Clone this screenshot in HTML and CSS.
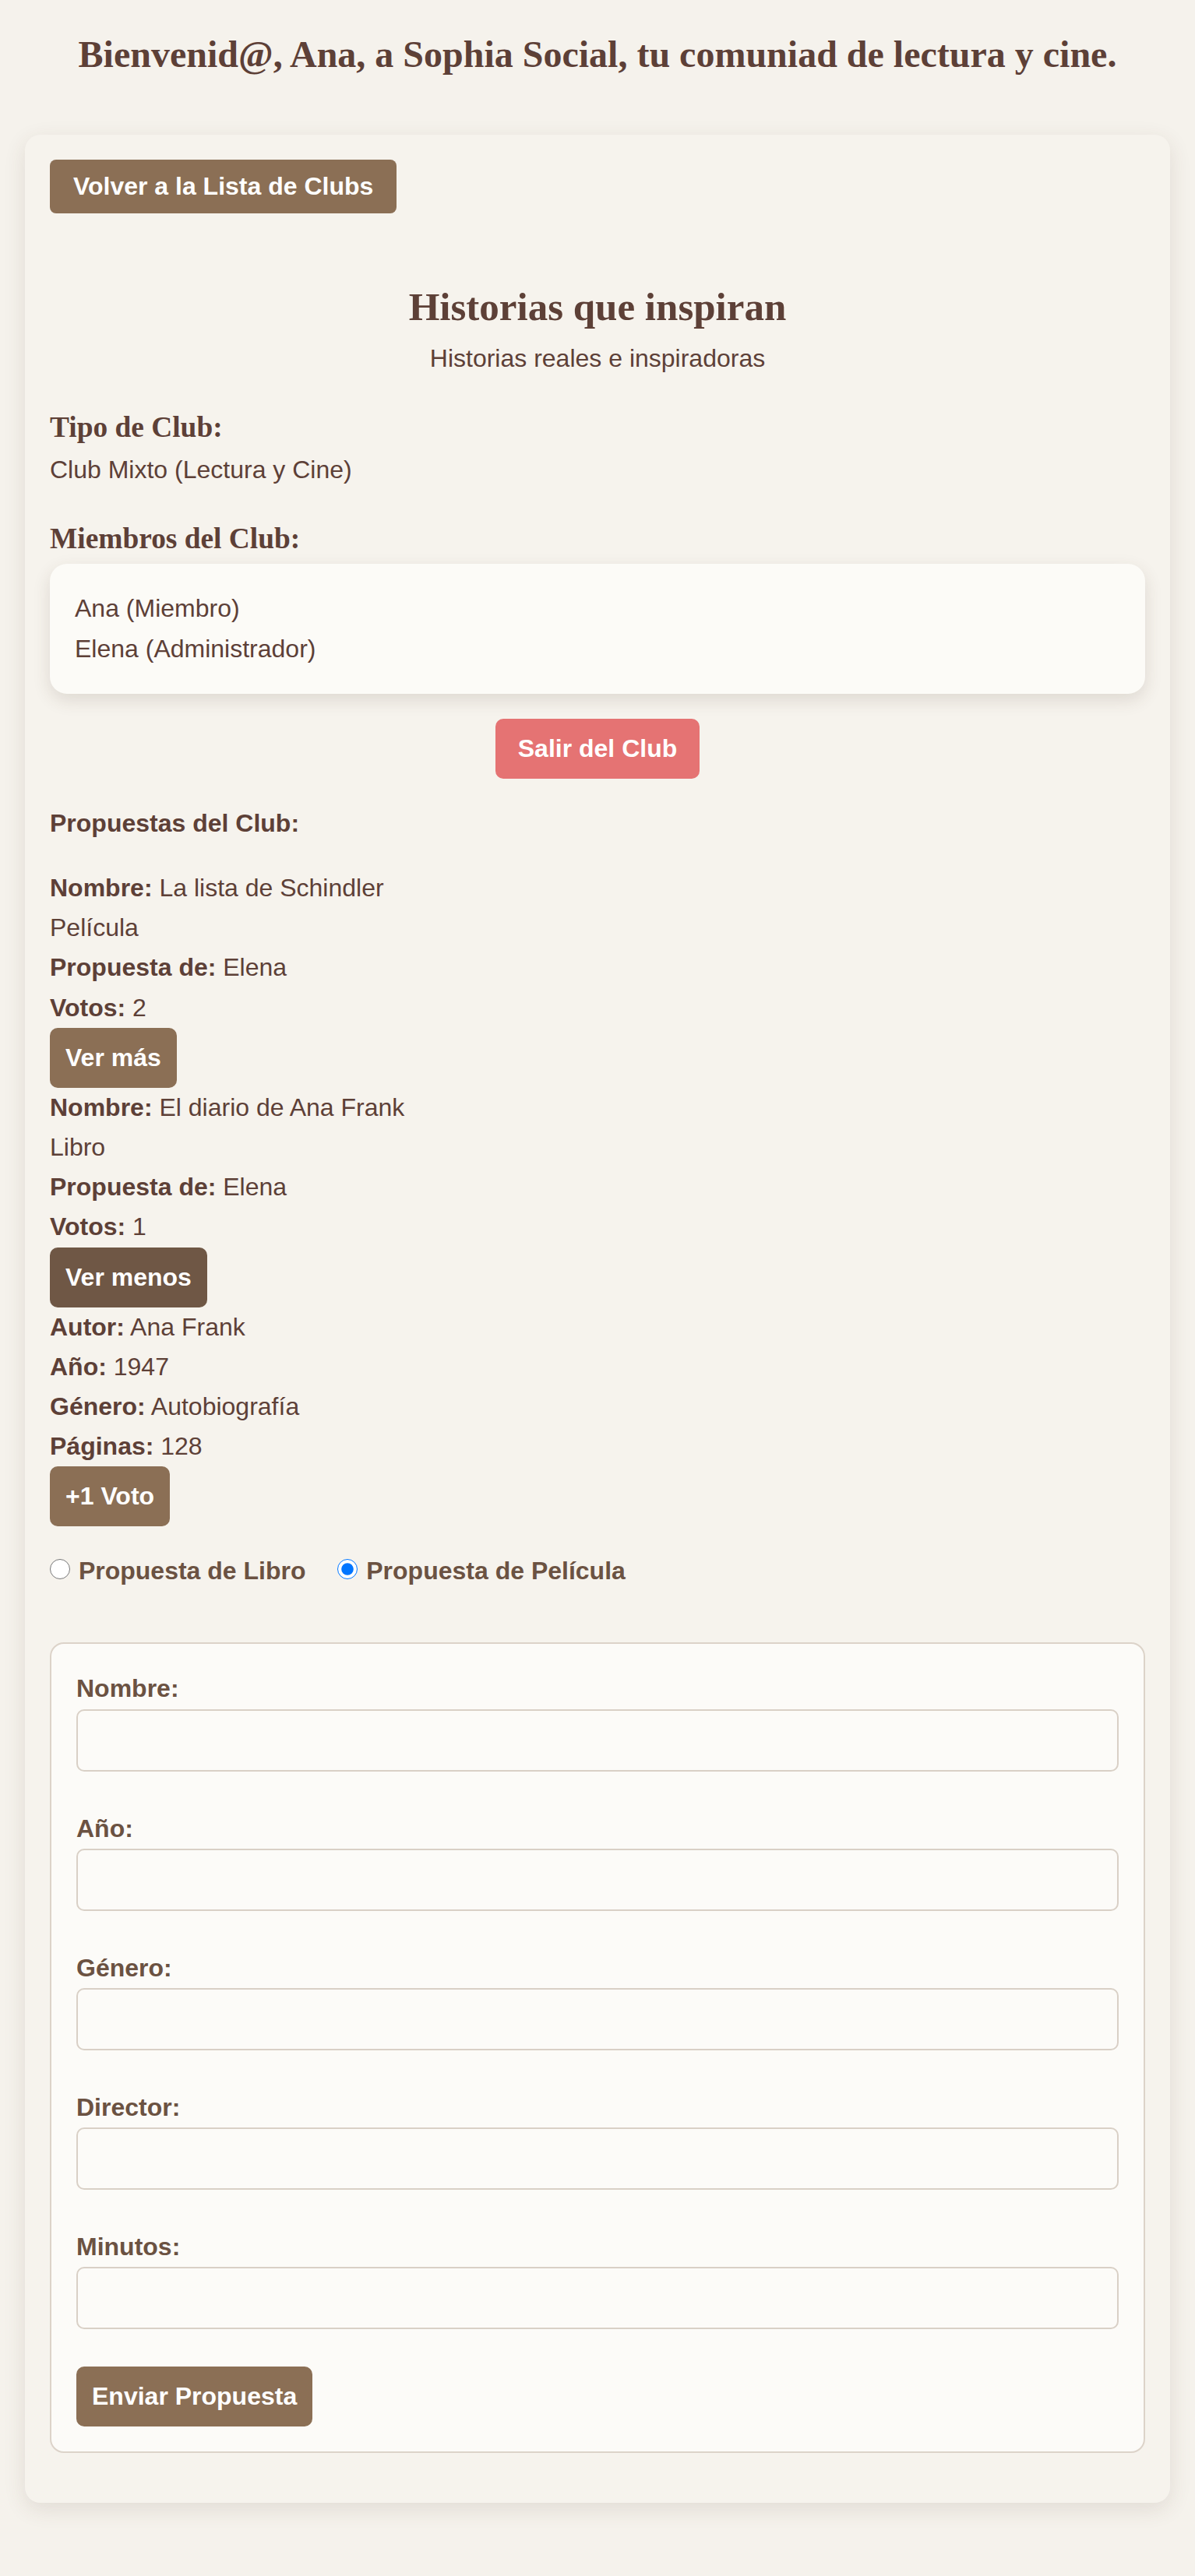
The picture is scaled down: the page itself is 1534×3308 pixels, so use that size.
FILE: index.html
```html
<!DOCTYPE html>
<html lang="es">
<head>
<meta charset="utf-8">
<title>Sophia Social - Historias que inspiran</title>
<link rel="stylesheet" href="styles.css">
</head>
<body>
<h1 class="welcome">Bienvenid@, Ana, a Sophia Social, tu comuniad de lectura y cine.</h1>
<main class="card">
  <button class="btn btn-back" type="button">Volver a la Lista de Clubs</button>

  <header class="club-header">
    <h2 class="club-title">Historias que inspiran</h2>
    <p class="club-desc">Historias reales e inspiradoras</p>
  </header>

  <h3 class="section-title">Tipo de Club:</h3>
  <p class="text">Club Mixto (Lectura y Cine)</p>

  <h3 class="section-title">Miembros del Club:</h3>
  <ul class="members">
    <li>Ana (Miembro)</li>
    <li>Elena (Administrador)</li>
  </ul>

  <div class="leave-row">
    <button class="btn btn-leave" type="button">Salir del Club</button>
  </div>

  <p class="proposals-title">Propuestas del Club:</p>

  <div class="proposals">
    <div class="proposal">
      <div class="line"><strong>Nombre:</strong> La lista de Schindler</div>
      <div class="line">Película</div>
      <div class="line"><strong>Propuesta de:</strong> Elena</div>
      <div class="line"><strong>Votos:</strong> 2</div>
      <button class="btn btn-small" type="button">Ver más</button>
    </div>
    <div class="proposal">
      <div class="line"><strong>Nombre:</strong> El diario de Ana Frank</div>
      <div class="line">Libro</div>
      <div class="line"><strong>Propuesta de:</strong> Elena</div>
      <div class="line"><strong>Votos:</strong> 1</div>
      <button class="btn btn-small btn-active" type="button">Ver menos</button>
      <div class="line"><strong>Autor:</strong> Ana Frank</div>
      <div class="line"><strong>Año:</strong> 1947</div>
      <div class="line"><strong>Género:</strong> Autobiografía</div>
      <div class="line"><strong>Páginas:</strong> 128</div>
      <button class="btn btn-small" type="button">+1 Voto</button>
    </div>
  </div>

  <div class="type-choice">
    <label class="choice"><input type="radio" name="tipo" value="libro"> Propuesta de Libro</label>
    <label class="choice"><input type="radio" name="tipo" value="pelicula" checked> Propuesta de Película</label>
  </div>

  <form class="proposal-form">
    <div class="field">
      <label class="field-label" for="f-nombre">Nombre:</label>
      <input class="field-input" id="f-nombre" type="text">
    </div>
    <div class="field">
      <label class="field-label" for="f-anio">Año:</label>
      <input class="field-input" id="f-anio" type="text">
    </div>
    <div class="field">
      <label class="field-label" for="f-genero">Género:</label>
      <input class="field-input" id="f-genero" type="text">
    </div>
    <div class="field">
      <label class="field-label" for="f-director">Director:</label>
      <input class="field-input" id="f-director" type="text">
    </div>
    <div class="field">
      <label class="field-label" for="f-minutos">Minutos:</label>
      <input class="field-input" id="f-minutos" type="text">
    </div>
    <button class="btn btn-small" type="button">Enviar Propuesta</button>
  </form>
</main>
</body>
</html>
```

FILE: styles.css
```css
html {
  background: #f5f2ec;
}

body {
  margin: 0;
  padding: 0 32px 96px;
  background: #f5f2ec;
  color: #5d4037;
  font-family: "Liberation Sans", Arial, sans-serif;
  font-size: 32px;
  line-height: 1.6;
}

.welcome {
  margin: 32px 0 64px;
  text-align: center;
  font-family: "Liberation Serif", "Times New Roman", serif;
  font-size: 48px;
  font-weight: bold;
  color: #5d4037;
}

.card {
  display: block;
  background: #f6f3ed;
  border-radius: 20px;
  padding: 32px;
  box-shadow: 0 8px 28px rgba(80, 60, 40, 0.12);
}

.btn {
  display: block;
  width: fit-content;
  border: none;
  border-radius: 10px;
  background: #8b6f55;
  color: #ffffff;
  font-family: "Liberation Sans", Arial, sans-serif;
  font-size: 32px;
  font-weight: bold;
  line-height: 37px;
  padding: 20px;
  cursor: pointer;
}

.btn-back {
  padding: 16px 30px;
  border-radius: 8px;
}

.btn-leave {
  display: inline-block;
  background: #e57373;
  padding: 20px 29px;
}

.btn-active {
  background: #6f5745;
}

.club-header {
  margin-top: 80px;
  text-align: center;
}

.club-title {
  margin: 0;
  font-family: "Liberation Serif", "Times New Roman", serif;
  font-size: 51px;
  font-weight: bold;
}

.club-desc {
  margin: 0 0 32px;
}

.section-title {
  margin: 0;
  font-family: "Liberation Serif", "Times New Roman", serif;
  font-size: 37.4px;
  font-weight: bold;
}

.text {
  margin: 0 0 32px;
}

.members {
  list-style: none;
  margin: 3px 0 0;
  padding: 32px;
  background: #fcfbf7;
  border-radius: 22px;
  box-shadow: 0 8px 22px rgba(80, 60, 40, 0.14);
}

.leave-row {
  margin-top: 32px;
  text-align: center;
}

.proposals-title {
  margin: 32px 0;
  font-weight: bold;
}

.proposal .line {
  margin: 0;
}

.type-choice {
  margin: 32px 0 66px;
  font-weight: bold;
  color: #6b5242;
}

.choice {
  margin-right: 32px;
}

.choice input {
  width: 26px;
  height: 26px;
  margin: 0 2px 0 0;
}

.proposal-form {
  margin: 0 0 32px;
  padding: 32px;
  background: #fcfbf8;
  border: 2px solid #dcd3c9;
  border-radius: 18px;
}

.field {
  margin-bottom: 48px;
}

.field-label {
  display: block;
  font-weight: bold;
  color: #6b5242;
}

.field-input {
  display: block;
  box-sizing: border-box;
  width: 100%;
  height: 80px;
  margin: 0;
  padding: 0 20px;
  border: 2px solid #d9d0c6;
  border-radius: 10px;
  background: #fcfbf8;
  font-family: "Liberation Sans", Arial, sans-serif;
  font-size: 32px;
  color: #5d4037;
}
```
